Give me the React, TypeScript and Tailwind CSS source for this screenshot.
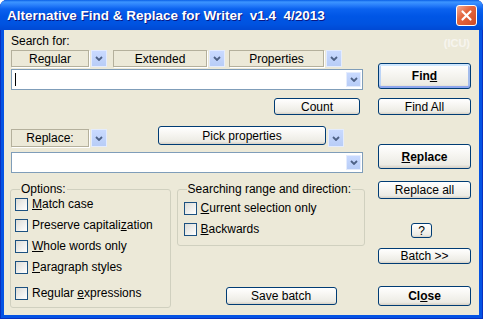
import type { ReactNode } from "react";

const btn =
  "flex items-center justify-center rounded-[3px] border border-[#003c74] bg-[linear-gradient(180deg,#ffffff_0%,#f7f6f2_40%,#ecebe4_85%,#d6d0c5_100%)] text-black";

function Chevron() {
  return (
    <svg width="8" height="5" viewBox="0 0 8 5">
      <polyline points="1,1 4,4 7,1" fill="none" stroke="#4d6185" strokeWidth="1.8" />
    </svg>
  );
}

function ArrowBox({ className = "" }: { className?: string }) {
  return (
    <div
      className={`flex shrink-0 items-center justify-center border border-[#e4ecfd] bg-[linear-gradient(180deg,#c9daff,#b8cdf7)] ${className}`}
    >
      <Chevron />
    </div>
  );
}

function FlatBox({ children, className = "" }: { children: ReactNode; className?: string }) {
  return (
    <div
      className={`flex shrink-0 items-center justify-center border border-[#b4b09c] shadow-[1px_1px_0_#ffffff] ${className}`}
    >
      {children}
    </div>
  );
}

function Check({ label, className = "" }: { label: ReactNode; className?: string }) {
  return (
    <div className={`flex h-[13px] items-center ${className}`}>
      <span className="h-[13px] w-[13px] shrink-0 border border-[#1c5180] bg-[linear-gradient(135deg,#dcdcd7,#ffffff)]" />
      <span className="ml-[4px] leading-[13px] whitespace-nowrap">{label}</span>
    </div>
  );
}

function TextField({ caret = false }: { caret?: boolean }) {
  return (
    <div className="flex h-[21px] w-[352px] items-center justify-between border border-[#7f9db9] bg-white pr-[1px]">
      {caret ? <span className="ml-[3px] h-[13px] w-px bg-black" /> : <span />}
      <ArrowBox className="h-[15px] w-[15px]" />
    </div>
  );
}

export default function App() {
  return (
    <div className="flex h-[319px] w-[483px] flex-col overflow-hidden rounded-t-[7px] bg-[#0453e4] font-['Liberation_Sans',Arial,sans-serif] text-[12px] text-black shadow-[inset_1px_0_0_#0830c0,inset_-1px_0_0_#0830c0,inset_0_-1px_0_#0830c0]">
      {/* Title bar */}
      <div className="flex h-[30px] shrink-0 items-start bg-[linear-gradient(180deg,#0a5fe6_0px,#3d95ff_2px,#2a80fb_5px,#0b62ef_9px,#0056e6_16px,#0053e0_24px,#0049d4_30px)] pl-[7px] pr-[6px]">
        <span className="mt-[8px] whitespace-pre text-[13.5px] leading-[16px] font-bold text-white [text-shadow:1px_1px_#0a1883]">
          Alternative Find &amp; Replace for Writer  v1.4  4/2013
        </span>
        <div className="ml-auto mt-[5px] flex h-[21px] w-[21px] items-center justify-center rounded-[3px] border border-white bg-[linear-gradient(135deg,#f3ab95_0%,#e4673f_40%,#cf4a26_100%)]">
          <svg width="13" height="13" viewBox="0 0 13 13">
            <path d="M2.5 2.5 L10.5 10.5 M10.5 2.5 L2.5 10.5" stroke="#ffffff" strokeWidth="2.2" strokeLinecap="round" />
          </svg>
        </div>
      </div>

      {/* Client area */}
      <div className="mx-[4px] mb-[4px] flex flex-1 bg-[#ece9d8] pl-[7px]">
        {/* Left column */}
        <div className="flex w-[354px] flex-col">
          <div className="mt-[4px] h-[14px] leading-[14px]">Search for:</div>

          <div className="mt-[2px] flex h-[17px]">
            <FlatBox className="h-[17px] w-[78px]">Regular</FlatBox>
            <ArrowBox className="ml-[2px] h-[17px] w-[16px]" />
            <FlatBox className="ml-[6px] h-[17px] w-[94px]">Extended</FlatBox>
            <ArrowBox className="ml-[2px] h-[17px] w-[16px]" />
            <FlatBox className="ml-[4px] h-[17px] w-[95px]">Properties</FlatBox>
            <ArrowBox className="ml-[2px] h-[17px] w-[16px]" />
          </div>

          <div className="mt-[2px]">
            <TextField caret />
          </div>

          <div className="mt-[8px] flex">
            <button type="button" className={`${btn} ml-[263px] h-[17px] w-[86px]`}>
              Count
            </button>
          </div>

          <div className="mt-[11px] flex h-[21px] items-start">
            <FlatBox className="mt-[3px] h-[18px] w-[78px]">Replace:</FlatBox>
            <ArrowBox className="ml-[2px] mt-[3px] h-[18px] w-[16px]" />
            <button type="button" className={`${btn} ml-[51px] h-[19px] w-[168px]`}>
              Pick properties
            </button>
            <ArrowBox className="ml-[2px] mt-[3px] h-[18px] w-[16px]" />
          </div>

          <div className="mt-[5px]">
            <TextField />
          </div>

          <div className="mt-[9px] flex items-start">
            <fieldset className="-ml-px h-[126px] w-[161px] rounded-[3px] border border-[#d0d0bf] pl-[4px]">
              <legend className="ml-[5px] px-[1px] leading-[14px]">Options:</legend>
              <div className="flex flex-col gap-[8px] pt-[2px]">
                <Check label={<><u>M</u>atch case</>} />
                <Check label={<>Preserve capitali<u>z</u>ation</>} />
                <Check label={<><u>W</u>hole words only</>} />
                <Check label={<><u>P</u>aragraph styles</>} />
                <Check className="mt-[5px]" label={<>Regular <u>e</u>xpressions</>} />
              </div>
            </fieldset>

            <div className="ml-[6px] flex w-[189px] flex-col">
              <fieldset className="h-[64px] rounded-[3px] border border-[#d0d0bf] pl-[6px]">
                <legend className="ml-[3px] px-[1px] leading-[14px]">Searching range and direction:</legend>
                <div className="flex flex-col gap-[8px] pt-[6px]">
                  <Check label={<><u>C</u>urrent selection only</>} />
                  <Check label={<><u>B</u>ackwards</>} />
                </div>
              </fieldset>
              <button type="button" className={`${btn} ml-[49px] mt-[41px] h-[18px] w-[111px]`}>
                Save batch
              </button>
            </div>
          </div>
        </div>

        {/* Right column */}
        <div className="ml-[13px] flex w-[93px] flex-col">
          <div className="mt-[7px] h-[12px] pr-[1px] text-right text-[11px] leading-[12px] font-bold text-[#f7f5ef]">
            (ICU)
          </div>
          <button
            type="button"
            className={`${btn} mt-[14px] h-[26px] w-[93px] font-bold shadow-[inset_0_2px_0_#cee7ff,inset_0_-2px_0_#8ea6ee,inset_2px_0_0_#bcd4f6,inset_-2px_0_0_#a3bcec]`}
          >
            Fin<u>d</u>
          </button>
          <button type="button" className={`${btn} mt-[9px] h-[17px] w-[93px]`}>
            Find All
          </button>
          <button type="button" className={`${btn} mt-[29px] h-[25px] w-[93px] font-bold`}>
            <u>R</u>eplace
          </button>
          <button type="button" className={`${btn} mt-[12px] h-[18px] w-[93px]`}>
            Replace all
          </button>
          <button type="button" className={`${btn} ml-[33px] mt-[24px] h-[15px] w-[21px]`}>
            ?
          </button>
          <button type="button" className={`${btn} mt-[10px] h-[16px] w-[93px]`}>
            Batch &gt;&gt;
          </button>
          <button type="button" className={`${btn} mt-[22px] h-[20px] w-[93px] font-bold`}>
            Cl<u>o</u>se
          </button>
        </div>
      </div>
    </div>
  );
}
